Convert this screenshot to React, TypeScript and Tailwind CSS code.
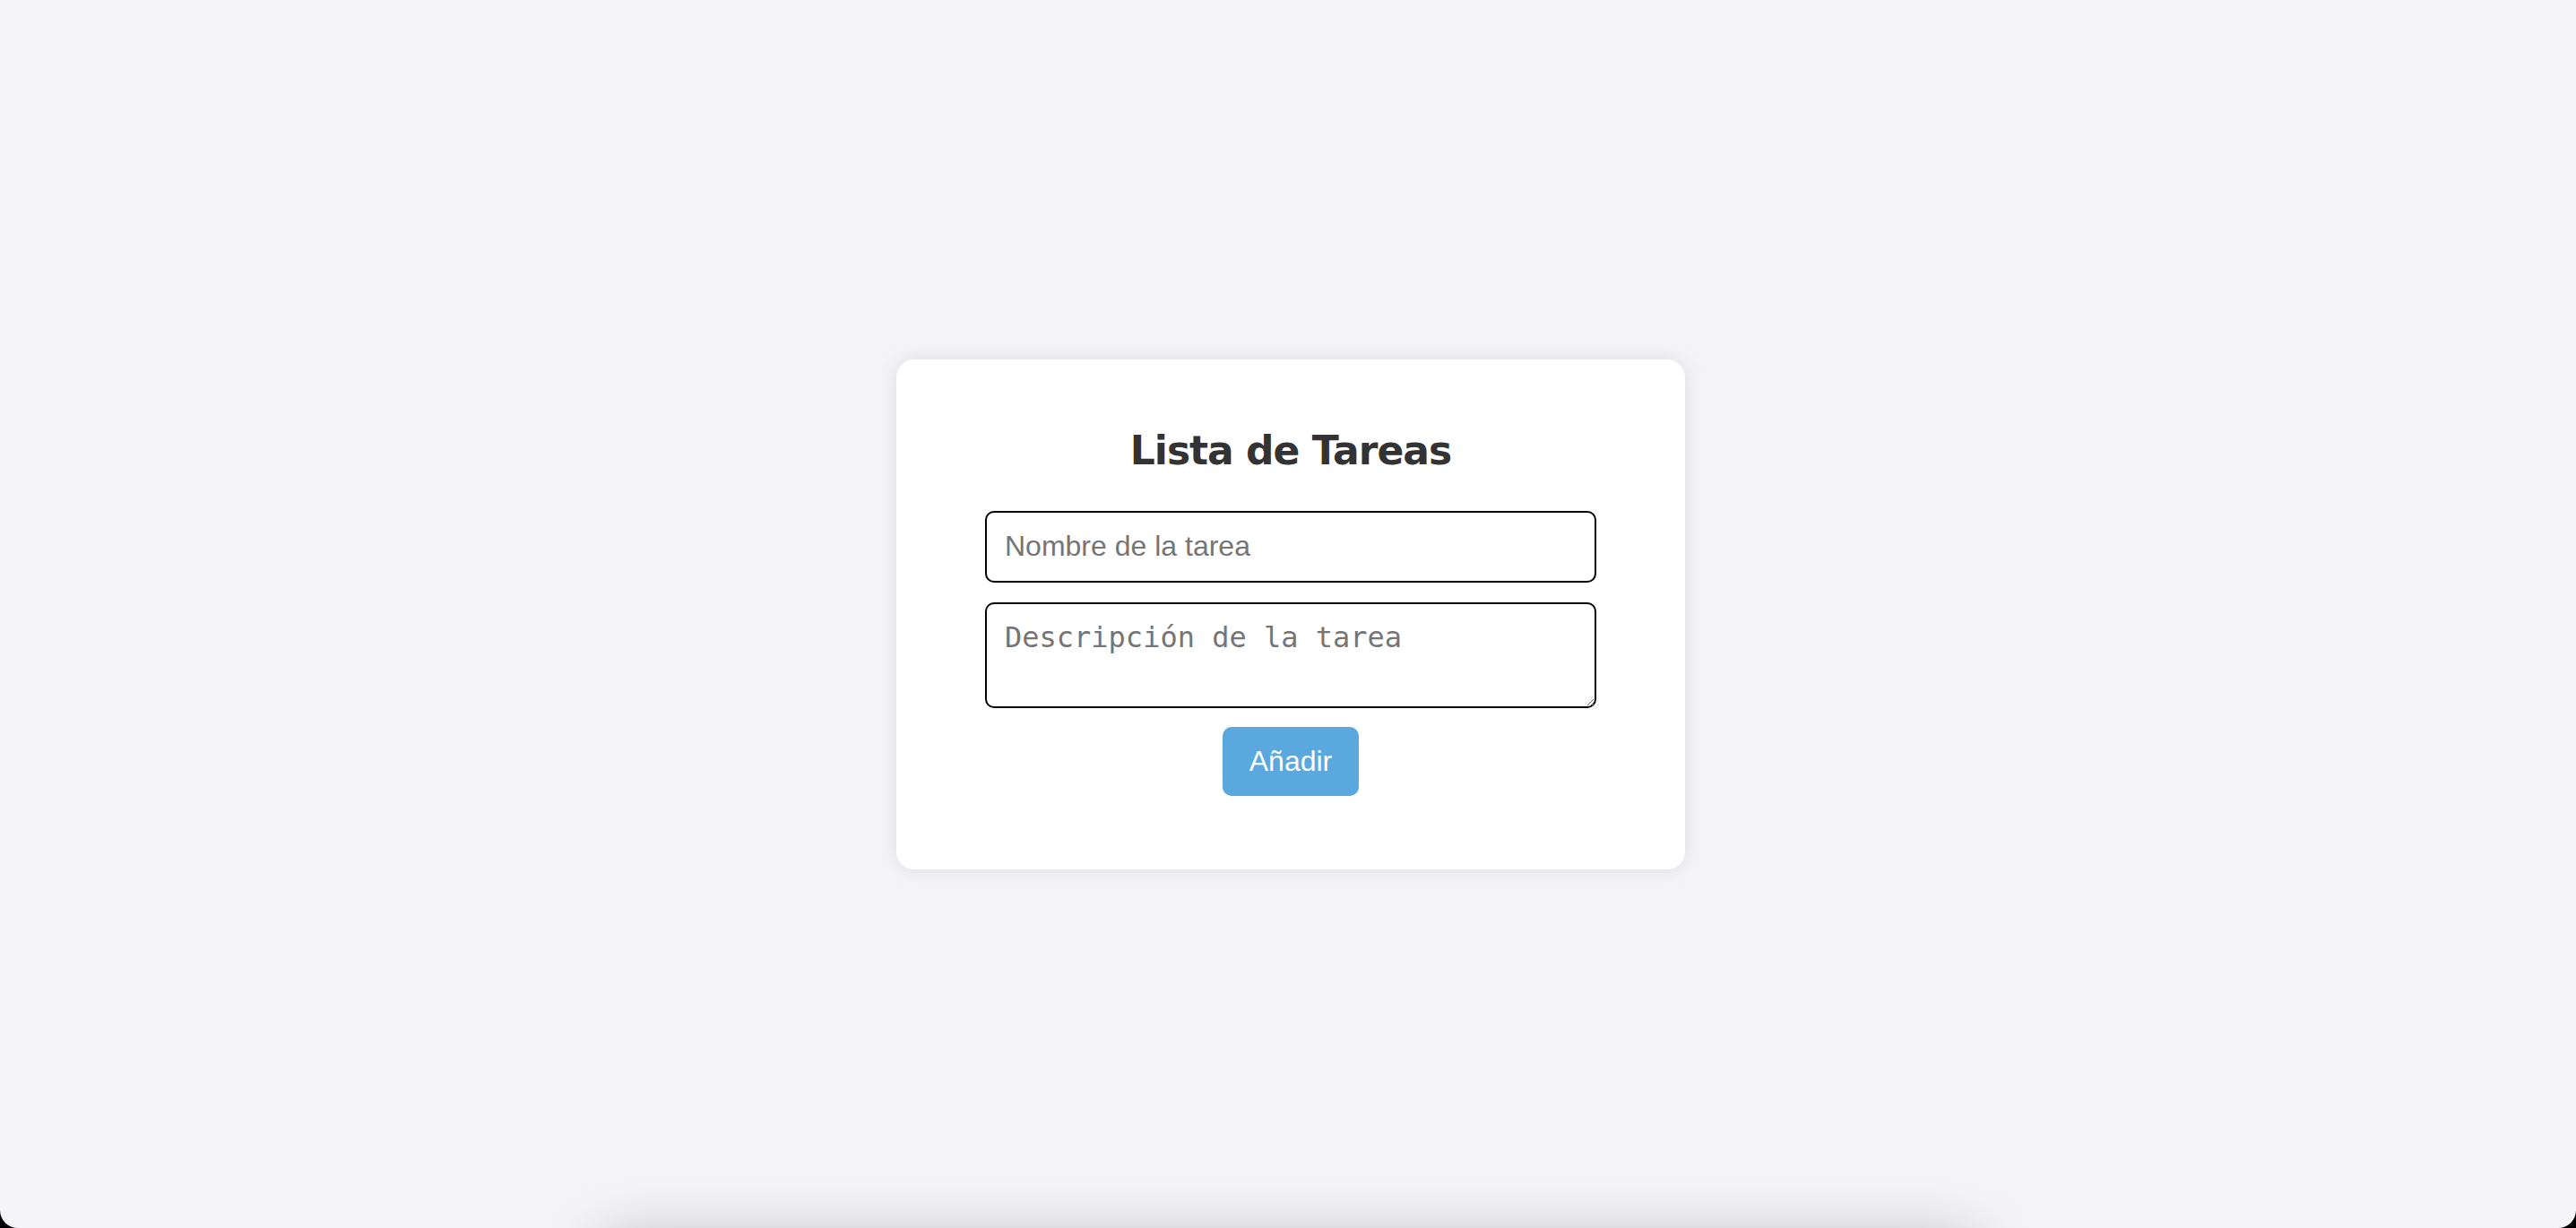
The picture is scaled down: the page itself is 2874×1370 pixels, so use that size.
export default function App() {
  return (
    <div className="h-screen w-full overflow-hidden bg-black">
      <div className="h-full w-full overflow-hidden rounded-b-[20px] bg-[#f4f4f9] font-['Liberation_Sans',Arial,sans-serif]">
        <main className="flex h-[1370px] items-center justify-center pl-[6px]">
          <div className="flex h-[569px] w-[880px] flex-col items-center rounded-[20px] bg-white pt-[70px] shadow-[0_0_24px_rgba(0,0,0,0.1)]">
            <h2 className="font-['DejaVu_Sans',Verdana,sans-serif] text-[44px] font-bold leading-[64px] tracking-[-1px] text-[#333]">
              Lista de Tareas
            </h2>
            <form className="mt-[35px] flex w-[682px] flex-col items-center">
              <input
                type="text"
                placeholder="Nombre de la tarea"
                className="h-[80px] w-full rounded-[10px] border-2 border-black px-[20px] text-[32px] text-[#333] placeholder:text-[#757575] outline-none"
              />
              <textarea
                placeholder="Descripción de la tarea"
                className="mt-[22px] h-[118px] w-full resize-y rounded-[10px] border-2 border-black px-[20px] pt-[18px] font-['DejaVu_Sans_Mono',monospace] text-[32px] leading-[38px] text-[#333] placeholder:text-[#757575] outline-none"
              />
              <button
                type="button"
                className="mt-[21px] h-[77px] w-[152px] rounded-[10px] bg-[#5aa8dd] text-[32px] text-white"
              >
                Añadir
              </button>
            </form>
          </div>
        </main>
        <div className="mx-auto mt-[12px] h-[200px] w-[1540px] rounded-[20px] bg-white shadow-[0_0_70px_rgba(0,0,0,0.24)]"></div>
      </div>
    </div>
  );
}
